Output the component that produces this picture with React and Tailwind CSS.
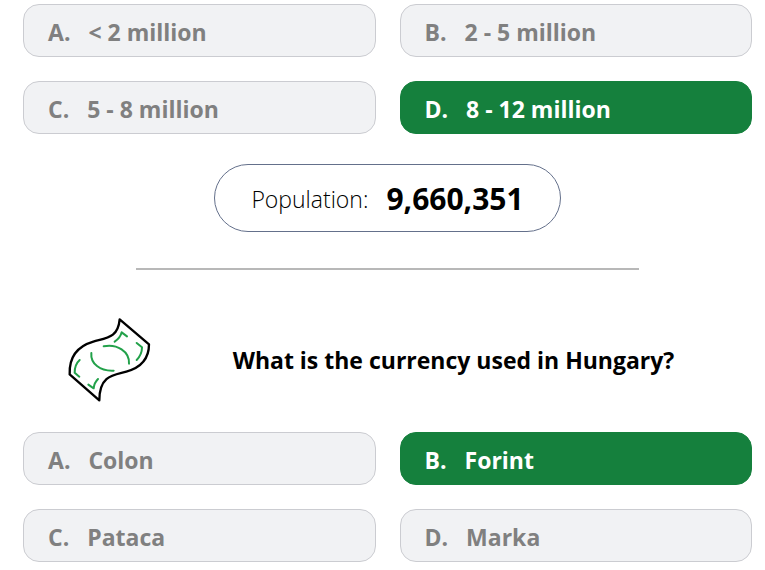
import React from 'react';
import clsx from 'clsx';

const POPULATION_OPTIONS = ['< 2 million', '2 - 5 million', '5 - 8 million', '8 - 12 million'];
const CURRENCY_OPTIONS = ['Colon', 'Forint', 'Pataca', 'Marka'];
const LETTERS = ['A', 'B', 'C', 'D'];

function BanknoteIcon() {
    return (
        <svg
            viewBox="45 30 270 270"
            className="w-[90px] h-[90px] shrink-0"
            fill="none"
            strokeWidth="7"
            strokeLinecap="round"
            strokeLinejoin="round"
            aria-hidden="true"
        >
            <path
                stroke="#000"
                d="M209 43 L297 118 C297 166 269 189 229 200 C194 210 148 209 148 286 L59 208 C57 156 82 124 130 110 C172 98 204 98 209 43 Z"
            />
            <g stroke="#22a14a" strokeWidth="6">
                <path d="M161 124 C201 116 239 139 237 176" />
                <path d="M124 144 C121 176 150 199 191 197" />
                <path d="M194 110 C205 103 212 94 215 82 L231 94" />
                <path d="M260 114 L276 127 C276 142 270 155 260 165" />
                <path d="M89 165 C79 174 74 188 74 203 L88 215" />
                <path d="M144 222 C136 230 132 239 131 250 L115 239" />
            </g>
        </svg>
    );
}

function AnswerGrid({ options, answer }) {
    return (
        <div className="grid grid-cols-2 gap-6">
            {options.map((option, index) => (
                <button
                    key={option}
                    type="button"
                    className={clsx(
                        'flex items-center gap-[18px] h-[53px] px-6 pt-0.5 rounded-2xl border text-[23px] leading-8 font-bold text-left whitespace-nowrap',
                        option === answer
                            ? 'bg-[#15803d] border-[#15803d] text-white'
                            : 'bg-[#f1f2f4] border-[#cbccd1] text-[#808080]'
                    )}
                >
                    <span>{LETTERS[index]}.</span>
                    <span>{option}</span>
                </button>
            ))}
        </div>
    );
}

function App() {
    return (
        <main className="bg-white pl-[23px] pr-[13px] pt-1 pb-2 font-['Open_Sans','Noto_Sans',sans-serif] text-black">
            <section>
                <AnswerGrid options={POPULATION_OPTIONS} answer="8 - 12 million" />
                <div className="mt-[30px] mx-auto w-fit h-[68px] px-9 pt-0.5 flex items-center gap-[18px] rounded-full border border-[#64708b]">
                    <span className="text-[23px] leading-8 font-light">Population:</span>
                    <span className="text-[30px] leading-8 font-bold">9,660,351</span>
                </div>
            </section>

            <hr className="mt-9 mx-auto w-[69%] border-t-2 border-[#b8b8b8]" />

            <section className="mt-[45px]">
                <div className="flex items-center pl-[42px]">
                    <BanknoteIcon />
                    <h2 className="flex-1 text-center text-[23px] leading-8 font-bold">
                        What is the currency used in Hungary?
                    </h2>
                </div>
                <div className="mt-[27px]">
                    <AnswerGrid options={CURRENCY_OPTIONS} answer="Forint" />
                </div>
            </section>
        </main>
    );
}

export default App;
